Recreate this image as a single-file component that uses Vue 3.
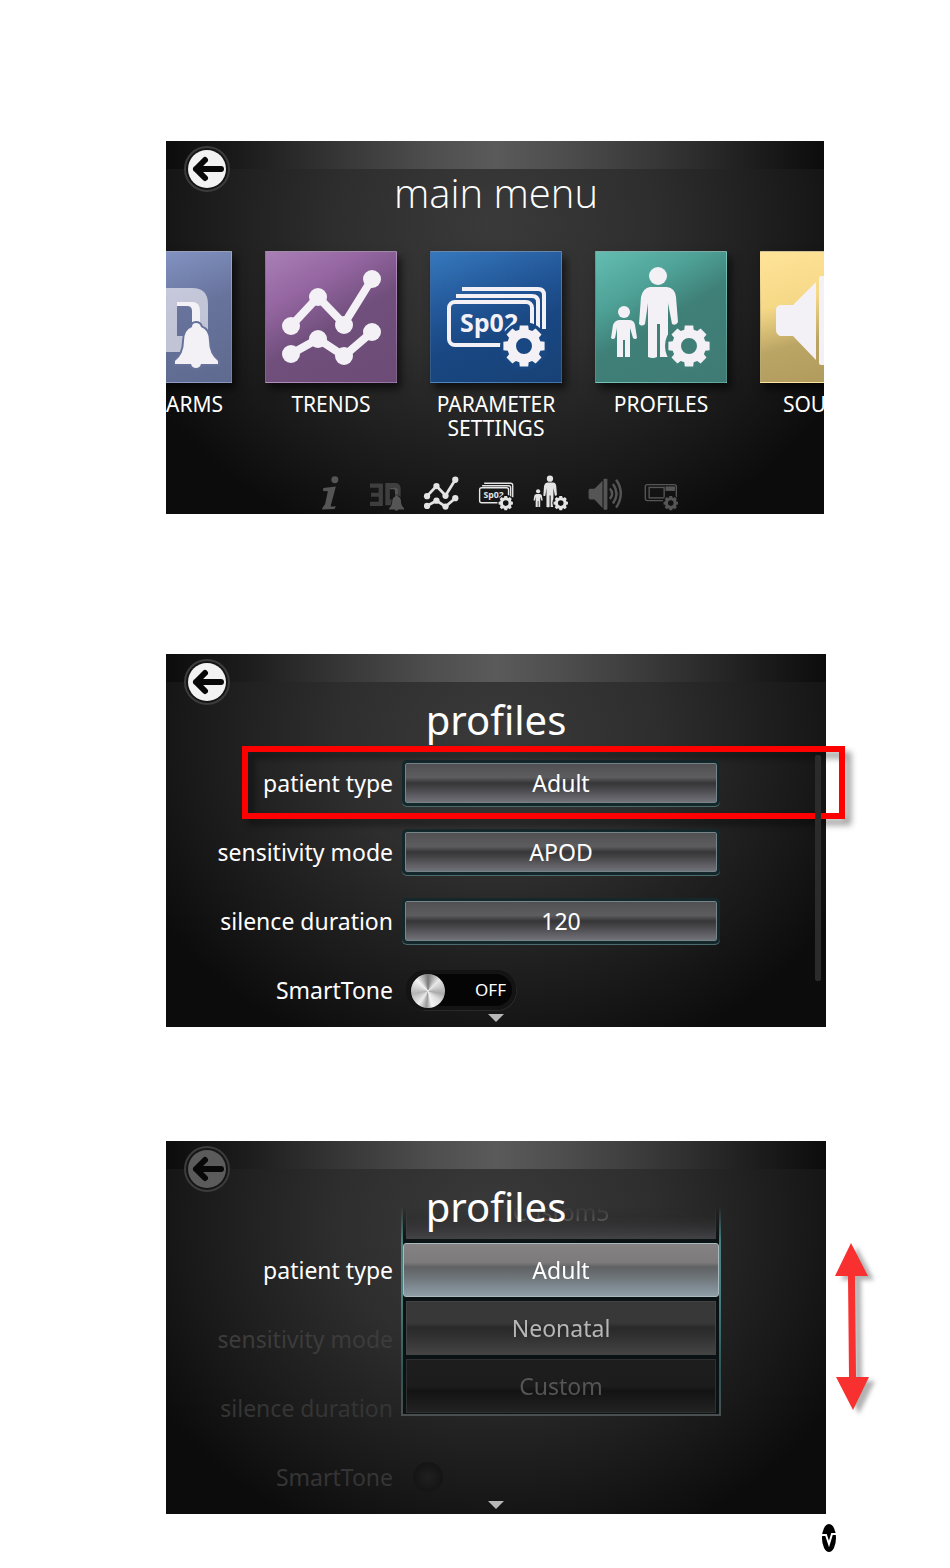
<script setup>
import { ref } from 'vue'

const point = (radius, angle) =>
  `${(94 + radius * Math.cos(angle)).toFixed(1)} ${(95 + radius * Math.sin(angle)).toFixed(1)}`

const gearPath = (() => {
  const parts = []
  for (let i = 0; i < 8; i++) {
    const a = (i * Math.PI) / 4
    parts.push(point(17, a - 0.28), point(21, a - 0.2), point(21, a + 0.2), point(17, a + 0.28))
  }
  return `M${parts.join('L')}ZM102 95a8 8 0 1 0-16 0a8 8 0 1 0 16 0Z`
})()

const tiles = [
  { id: 'alarms', label: '3D ALARMS' },
  { id: 'trends', label: 'TRENDS' },
  { id: 'parameter', label: 'PARAMETER SETTINGS' },
  { id: 'profiles', label: 'PROFILES' },
  { id: 'sounds', label: 'SOUNDS' }
]

const shortcuts = [
  { id: 'info', label: 'About', active: false },
  { id: 'alarms', label: '3D alarms', active: false },
  { id: 'trends', label: 'Trends', active: true },
  { id: 'parameter', label: 'Parameter settings', active: true },
  { id: 'profiles', label: 'Profiles', active: true },
  { id: 'sounds', label: 'Sounds', active: false },
  { id: 'device', label: 'Device settings', active: false }
]

const fields = ref([
  { id: 'patient', label: 'patient type', value: 'Adult', options: ['Adult', 'Neonatal', 'Custom'] },
  { id: 'sensitivity', label: 'sensitivity mode', value: 'APOD', options: ['APOD'] },
  { id: 'silence', label: 'silence duration', value: '120', options: ['120'] }
])
const smartTone = ref(false)

const choices = ['Custom5', 'Adult', 'Neonatal', 'Custom']
const selected = ref('Adult')
</script>

<template>
  <main class="page">
    <svg class="sprite" aria-hidden="true">
      <symbol id="icon-info" viewBox="0 0 132 132">
        <circle cx="77" cy="28" r="10" fill="currentColor" />
        <path d="M44 52L80 47L65 103Q65 107 80 103L76 112L40 113Q43 104 49 98L57 61L43 60Z" fill="currentColor" />
      </symbol>
      <symbol id="icon-alarms" viewBox="0 0 132 132">
        <path d="M20 45H51V97H20M23 71H50" fill="none" stroke="currentColor" stroke-width="12" opacity=".65" />
        <path fill-rule="evenodd" d="M64 37H92Q108 37 108 53V84Q108 101 92 101H64ZM77 51V85H90Q92 85 92 82V56Q92 51 88 51Z" fill="currentColor" opacity=".65" />
        <path d="M77 51H92Q100 51 100 60V85H92V60Q92 55 87 55H77Z" fill="currentColor" />
        <path d="M96 72Q100 72 101 76Q109 79 109 90Q109 103 118 110V113H101Q100 117 96 117Q92 117 91 113H75V110Q84 103 84 90Q84 79 92 76Q92 72 96 72Z" fill="currentColor" stroke="var(--gap)" stroke-width="4" paint-order="stroke" />
      </symbol>
      <symbol id="icon-trends" viewBox="0 0 132 132">
        <g fill="none" stroke="currentColor" stroke-width="8">
          <path d="M26 75L53 46L79 73L107 28" />
          <path d="M26 103L53 88L79 105L107 81" />
        </g>
        <g fill="currentColor">
          <circle cx="26" cy="75" r="9" /><circle cx="53" cy="46" r="9" /><circle cx="79" cy="74" r="9" /><circle cx="107" cy="28" r="9" />
          <circle cx="26" cy="103" r="9" /><circle cx="53" cy="88" r="9" /><circle cx="79" cy="105" r="9" /><circle cx="107" cy="81" r="9" />
        </g>
      </symbol>
      <symbol id="icon-parameter" viewBox="0 0 132 132">
        <g fill="none" stroke="currentColor" stroke-width="4">
          <rect x="19" y="51" width="83" height="43" rx="6" />
          <path d="M26 45H102Q108 45 108 51V78M32 38H108Q114 38 114 44V78" />
        </g>
        <text x="30" y="81" font-family="Open Sans, Noto Sans, sans-serif" font-weight="700" font-size="25" fill="currentColor">Sp02</text>
        <circle cx="94" cy="95" r="24" fill="var(--gap)" />
        <path :d="gearPath" fill="currentColor" fill-rule="evenodd" />
      </symbol>
      <symbol id="icon-profiles" viewBox="0 0 132 132">
        <g fill="currentColor">
          <circle cx="63" cy="25" r="9" />
          <path d="M55 36H72Q80 37 81 46L83 71Q81 75 77 73L73 52V106H65V73H62V106Q58 108 53 106V52L50 73Q47 76 44 73L46 46Q48 37 55 36Z" />
          <circle cx="29" cy="61" r="6" />
          <path d="M25 69H34Q39 69 40 74L42 87Q40 89 38 87L35 77V106H30V89H28V106H22V77L20 87Q18 89 16 87L18 74Q20 69 25 69Z" />
        </g>
        <circle cx="94" cy="95" r="24" fill="var(--gap)" />
        <path :d="gearPath" fill="currentColor" fill-rule="evenodd" />
      </symbol>
      <symbol id="icon-sounds" viewBox="0 0 132 132">
        <path d="M20 54H33L56 31V109L33 85H20Q16 83 16 79V59Q16 55 20 54Z" fill="currentColor" />
        <rect x="59" y="25" width="11" height="89" rx="2" fill="currentColor" />
        <path d="M77 53Q90 67 77 83M86 40Q106 67 86 96M95 28Q122 67 95 108" fill="none" stroke="currentColor" stroke-width="7" />
      </symbol>
      <symbol id="icon-device" viewBox="0 0 132 132">
        <rect x="21" y="42" width="89" height="46" rx="6" fill="none" stroke="currentColor" stroke-width="4" />
        <rect x="32" y="50" width="43" height="30" fill="none" stroke="currentColor" stroke-width="4" />
        <path d="M79 47H106V60H79Z" fill="currentColor" />
        <circle cx="94" cy="95" r="24" fill="var(--gap)" />
        <path :d="gearPath" fill="currentColor" fill-rule="evenodd" />
      </symbol>
      <symbol id="icon-back" viewBox="0 0 46 46">
        <circle cx="23" cy="23" r="22" fill="#151515" stroke="#3c3c3c" stroke-width="2" />
        <circle cx="23" cy="23" r="19" fill="currentColor" />
        <path d="M37 23H12M21 14L12 23L21 32" fill="none" stroke="#080808" stroke-width="6" stroke-linejoin="round" stroke-linecap="round" />
      </symbol>
    </svg>

    <section class="screen menu">
      <button class="back" type="button" aria-label="Back"><svg><use href="#icon-back" /></svg></button>
      <h1 class="title thin">main menu</h1>
      <nav class="carousel">
        <a v-for="tile in tiles" :key="tile.id" class="tile" href="#">
          <span class="face" :class="tile.id"><svg><use :href="`#icon-${tile.id}`" /></svg></span>
          <span class="caption">{{ tile.label }}</span>
        </a>
      </nav>
      <nav class="shortcuts">
        <a v-for="item in shortcuts" :key="item.id" href="#" :aria-label="item.label" :class="{ active: item.active }">
          <svg><use :href="`#icon-${item.id}`" /></svg>
        </a>
      </nav>
    </section>

    <section class="screen">
      <button class="back" type="button" aria-label="Back"><svg><use href="#icon-back" /></svg></button>
      <h2 class="title">profiles</h2>
      <form class="form">
        <div v-for="(field, i) in fields" :key="field.id" class="row">
          <label :for="field.id">{{ field.label }}</label>
          <select :id="field.id" v-model="field.value">
            <option v-for="option in field.options" :key="option">{{ option }}</option>
          </select>
          <span v-if="i === 0" class="highlight"></span>
        </div>
        <div class="row">
          <label for="tone">SmartTone</label>
          <span class="switch">
            <input id="tone" v-model="smartTone" type="checkbox" />
            <span class="state">{{ smartTone ? 'ON' : 'OFF' }}</span>
          </span>
        </div>
      </form>
      <span class="scrollbar"></span>
      <span class="more"></span>
    </section>

    <section class="screen picking">
      <button class="back" type="button" aria-label="Back" disabled><svg><use href="#icon-back" /></svg></button>
      <h2 class="title">profiles</h2>
      <div class="form">
        <div class="row">
          <span id="picker-label" class="name">patient type</span>
          <div class="picker">
            <div class="wheel" role="listbox" aria-labelledby="picker-label">
              <button
                v-for="choice in choices"
                :key="choice"
                type="button"
                role="option"
                class="choice"
                :class="{ selected: choice === selected }"
                :aria-selected="choice === selected"
                @click="selected = choice"
              >{{ choice }}</button>
            </div>
          </div>
        </div>
        <div class="row dim"><span class="name">sensitivity mode</span></div>
        <div class="row dim"><span class="name">silence duration</span></div>
        <div class="row dim"><span class="name">SmartTone</span><span class="ghost"></span></div>
      </div>
      <span class="more"></span>
      <svg class="drag" viewBox="0 0 48 176" aria-hidden="true">
        <path d="M17 2L34 35H21L22 136H35L19 169L2 136H15L14 35H1Z" fill="#f83030" />
      </svg>
    </section>

    <footer class="footer">
      <svg viewBox="0 0 14 28" role="img" aria-label="Logo">
        <ellipse cx="7" cy="14" rx="7" ry="14" fill="#000" />
        <path d="M0 11H4L7 20L10 10H14" fill="none" stroke="#fff" stroke-width="2" />
      </svg>
    </footer>
  </main>
</template>

<style>
body {
  margin: 0;
  background: #fff;
}
</style>

<style scoped>
.page {
  display: flex;
  flex-direction: column;
  padding: 141px 124px 16px 166px;
  font-family: "Noto Sans", "Open Sans", sans-serif;
  color: #fff;
}

.sprite {
  position: absolute;
  width: 0;
  height: 0;
}

.screen {
  position: relative;
  display: flex;
  flex-direction: column;
  box-sizing: border-box;
  min-height: 373px;
  margin-bottom: 114px;
  background:
    linear-gradient(90deg, #0c0c0c, #1c1c1c 12%, #393939 28%, #4e4e4e 40%, #5a5a5a 50%, #4e4e4e 60%, #383838 74%, #1c1c1c 90%, #0c0c0c) top / 100% 28px no-repeat,
    radial-gradient(ellipse 60% 92% at 50% 22%, #3a3a3a, #2e2e2e 40%, #181818 80%, #0c0c0c);
}

.menu {
  margin-right: 2px;
  margin-bottom: 140px;
  padding-left: 2px;
  overflow: hidden;
}

.picking {
  margin-bottom: 10px;
}

.back {
  position: absolute;
  top: 5px;
  left: 18px;
  width: 46px;
  height: 46px;
  padding: 0;
  border: 0;
  border-radius: 50%;
  background: none;
  color: #f2f2f2;
}

.back svg {
  display: block;
  width: 100%;
  height: 100%;
}

.back:disabled {
  color: #5b5b5b;
}

.title {
  position: relative;
  z-index: 2;
  margin: 38px 0 0;
  text-align: center;
  font-size: 40px;
  line-height: 56px;
  font-weight: 400;
  pointer-events: none;
}

.title.thin {
  margin-top: 24px;
  font-family: "Open Sans", "Noto Sans", sans-serif;
  font-weight: 300;
}

.carousel {
  display: flex;
  justify-content: center;
  gap: 33px;
  margin-top: 30px;
}

.tile {
  flex: 0 0 132px;
  text-align: center;
  text-decoration: none;
  color: #fff;
}

.face {
  display: block;
  box-sizing: border-box;
  height: 132px;
  border: 1px solid rgba(255, 255, 255, 0.12);
  border-top-color: rgba(255, 255, 255, 0.35);
  box-shadow: 4px 6px 8px rgba(0, 0, 0, 0.6);
  color: #f3f1f6;
}

.face svg {
  display: block;
  width: 132px;
  height: 132px;
  margin: -1px;
}

.face.alarms {
  --gap: #66729a;
  background: linear-gradient(160deg, #8b9dcf, #68739c 50%, #5f6a90);
}

.face.trends {
  --gap: #704f7c;
  background: linear-gradient(150deg, #a97fb5, #9566a2 28%, #704f7c 55%, #6c4c76);
}

.face.parameter {
  --gap: #194782;
  background: linear-gradient(160deg, #3678bd, #215596 38%, #194782 60%, #184276);
}

.face.profiles {
  --gap: #3f7f78;
  background: linear-gradient(150deg, #64bdb1, #4ea196 30%, #3f8078 52%, #3f7b74);
}

.face.sounds {
  --gap: #b9a25f;
  background: linear-gradient(165deg, #ffe398, #f6d987 35%, #bba565 62%, #ac985b);
}

.caption {
  display: block;
  margin-top: 9px;
  font-size: 21px;
  line-height: 24px;
}

.shortcuts {
  display: flex;
  justify-content: center;
  gap: 9px;
  margin-top: 30px;
  margin-bottom: -4px;
}

.shortcuts a {
  --gap: #121212;
  width: 46px;
  height: 46px;
  color: #555;
}

.shortcuts a.active {
  color: #e4e4e4;
}

.shortcuts svg {
  display: block;
  width: 100%;
  height: 100%;
}

.form {
  display: flex;
  flex-direction: column;
  gap: 21px;
  margin-top: 11px;
}

.row {
  position: relative;
  display: grid;
  grid-template-columns: 227fr 320fr 97fr;
  column-gap: 8px;
  align-items: center;
  height: 48px;
}

.row label,
.name {
  text-align: right;
  white-space: nowrap;
  font-size: 23px;
  line-height: 32px;
}

.row select {
  appearance: none;
  box-sizing: border-box;
  width: 312px;
  height: 40px;
  margin: 0 auto;
  padding: 0;
  border: 1px solid #77858b;
  border-radius: 2px;
  outline: 3px solid #14282b;
  box-shadow: 0 1px 0 3px #4a6a6c;
  background: linear-gradient(#505052, #5d5d5f 35%, #363638 50%, #3c3c3e 56%, #65656b 90%, #707378);
  color: #fff;
  font-family: inherit;
  font-size: 23px;
  text-align: center;
  text-align-last: center;
}

.highlight {
  position: absolute;
  inset: -13px -19px -12px 76px;
  border: 6px solid #fe0000;
  filter: drop-shadow(6px 6px 3px rgba(0, 0, 0, 0.4));
  pointer-events: none;
}

.switch {
  position: relative;
  display: flex;
  align-items: center;
  justify-content: flex-end;
  box-sizing: border-box;
  width: 110px;
  height: 40px;
  margin-left: 5px;
  padding-right: 10px;
  border-radius: 20px;
  background: linear-gradient(90deg, #101010, #050505 30%);
  box-shadow: inset 0 0 0 4px #141414, 1px 1px 0 #292929;
}

.switch input {
  position: absolute;
  inset: 4px auto auto 5px;
  appearance: none;
  width: 34px;
  height: 34px;
  margin: 0;
  border-radius: 50%;
  background: conic-gradient(#777, #e8e8e8 45deg, #aaa 100deg, #ddd 130deg, #f4f4f4 165deg, #999 185deg, #eee 215deg, #b5b5b5 260deg, #f3f3f3 315deg, #777);
}

.state {
  font-size: 17px;
  line-height: 24px;
}

.scrollbar {
  position: absolute;
  top: 101px;
  right: 5px;
  width: 6px;
  height: 226px;
  border-radius: 2px;
  background: #2b2b2b;
}

.more {
  position: absolute;
  bottom: 5px;
  left: 50%;
  width: 16px;
  height: 8px;
  margin-left: -8px;
  background: #b8b8b8;
  clip-path: polygon(0 0, 100% 0, 50% 100%);
}

.dim {
  color: #3c3c3c;
}

.dim + .dim {
  color: #353535;
}

.ghost {
  width: 30px;
  height: 30px;
  margin-left: 12px;
  border-radius: 50%;
  background: radial-gradient(#202020, #141414 70%);
}

.picker {
  position: relative;
  align-self: start;
  height: 48px;
}

.wheel {
  position: absolute;
  z-index: 1;
  top: -40px;
  left: 0;
  right: 0;
  display: flex;
  flex-direction: column;
  justify-content: flex-end;
  gap: 4px;
  box-sizing: border-box;
  height: 210px;
  padding: 0 3px 1px;
  overflow: hidden;
  border: solid transparent;
  border-width: 0 2px 2px;
  border-image: linear-gradient(#4a8484, #4a8484 40%, #2f5656 80%, #4b4f50) 1;
  background: #0b1214;
  mask-image: linear-gradient(transparent, #000 36px);
}

.choice {
  flex: 0 0 54px;
  padding: 0;
  border: 1px solid #444;
  background: linear-gradient(#373737, #383838 40%, #292929 50%, #303030 65%, #444);
  color: #b6b6b6;
  font-family: inherit;
  font-size: 23px;
  line-height: 32px;
}

.choice:first-child {
  border-top: 0;
  background: linear-gradient(#2b2b2d 60%, #45454a);
  color: #8a8a8a;
}

.choice:last-child {
  border-color: #303030;
  background: linear-gradient(#1d1d1d, #1c1c1c 50%, #131313 60%, #232323);
  color: #555;
}

.choice.selected {
  margin: 0 -3px;
  border: 1px solid #a9b9bd;
  border-radius: 3px;
  background: linear-gradient(#858283, #7c7a7b 36%, #606264 44%, #6c7276 62%, #8e9ea7);
  color: #fff;
}

.drag {
  position: absolute;
  top: 100px;
  right: -56px;
  width: 48px;
  height: 176px;
  filter: drop-shadow(6px 4px 2px rgba(0, 0, 0, 0.3));
}

.footer {
  display: flex;
  justify-content: flex-end;
  margin-right: -10px;
}

.footer svg {
  width: 14px;
  height: 28px;
}
</style>
